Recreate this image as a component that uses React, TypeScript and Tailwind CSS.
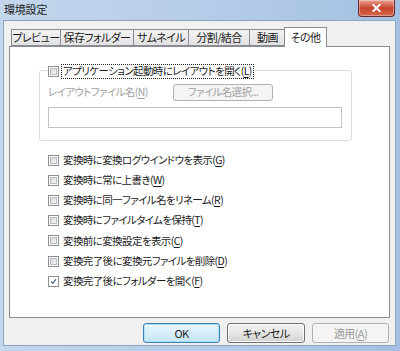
import React from 'react';

const font = "font-['Meiryo_UI','Noto_Sans_CJK_JP',sans-serif] [font-feature-settings:'palt']";

const tabs = ['プレビュー', '保存フォルダー', 'サムネイル', '分割/結合', '動画', 'その他'];
const tabWidths = ['w-[49px]', 'w-[73px]', 'w-[55px]', 'w-[61px]', 'w-[36px]', 'w-[43px]'];

const options = [
  { text: '変換時に変換ログウインドウを表示', key: 'G', checked: false },
  { text: '変換時に常に上書き', key: 'W', checked: false },
  { text: '変換時に同一ファイル名をリネーム', key: 'R', checked: false },
  { text: '変換時にファイルタイムを保持', key: 'T', checked: false },
  { text: '変換前に変換設定を表示', key: 'C', checked: false },
  { text: '変換完了後に変換元ファイルを削除', key: 'D', checked: false },
  { text: '変換完了後にフォルダーを開く', key: 'F', checked: true },
];

// Win7 風のチェックボックス
const CheckBox = ({ checked }: { checked?: boolean }) => (
  <span className="relative flex h-[11px] w-[11px] flex-shrink-0 border border-[#8e8f8f] bg-white p-px">
    {checked ? (
      <svg viewBox="0 0 9 9" className="h-full w-full">
        <path d="M1.5 4.6 L3.6 7 L7.6 1.6" fill="none" stroke="#3b4f8f" strokeWidth="1.5" />
      </svg>
    ) : (
      <span className="block h-full w-full border border-[#b9bdc2] bg-gradient-to-br from-[#d4d7db] to-[#f5f5f5]" />
    )}
  </span>
);

const Label = ({ text, k, disabled }: { text: string; k: string; disabled?: boolean }) => (
  <span className={`whitespace-nowrap ${disabled ? 'text-[#a0a0a0]' : 'text-[#1b1b1b]'}`}>
    {text}(<span className="underline underline-offset-2">{k}</span>)
  </span>
);

const App = () => {
  return (
    <div className={`flex h-[351px] w-[400px] flex-col bg-gradient-to-r from-[#c2d6ec] via-[#b6cde8] to-[#a3c0e2] text-[10.5px] leading-none tracking-[-0.6px] ${font}`}>
      {/* タイトルバー */}
      <div className="flex h-[20px] flex-shrink-0 items-start justify-between">
        <span className="mt-[4px] pl-[4px] text-[11px] tracking-[-0.2px] text-[#1a1a1a]">環境設定</span>
        <div className="mr-[5px] flex h-[17px] w-[37px] items-center justify-center rounded-b-[4px] border border-t-0 border-[#6d2a2a] bg-gradient-to-b from-[#e8a093] via-[#c8432e] to-[#d2674c] shadow-[inset_0_0_0_1px_rgba(255,255,255,0.35)]">
          <svg viewBox="0 0 10 9" className="h-[8px] w-[9px]">
            <path d="M1.5 1 L8.5 8 M8.5 1 L1.5 8" stroke="white" strokeWidth="2.2" strokeLinecap="square" />
          </svg>
        </div>
      </div>

      {/* 本体 */}
      <div className="ml-[3px] mr-[4px] flex flex-1 flex-col border border-[#8da2bc] bg-[#f0f0f0] pl-[5px] pr-[5px] pt-[6px]">
        <div className="relative z-10 flex h-[19px] items-end pl-[2px]">
          {tabs.map((t, i) => {
            const active = i === tabs.length - 1;
            return (
              <div
                key={t}
                className={
                  active
                    ? `${tabWidths[i]} -mb-px -ml-px flex h-[20px] items-center justify-center whitespace-nowrap border border-b-0 border-[#898c95] bg-white text-[11px] text-[#1b1b1b]`
                    : `${tabWidths[i]} flex h-[17px] items-center justify-center whitespace-nowrap border border-r-0 border-[#898c95] bg-gradient-to-b from-[#f3f3f3] to-[#e2e2e2] text-[11px] text-[#1b1b1b]`
                }
              >
                {t}
              </div>
            );
          })}
        </div>

        <div className="flex h-[272px] flex-col border border-[#898c95] bg-white pl-[29px] pt-[23px]">
          {/* グループボックス */}
          <div className="relative flex h-[71px] w-[313px] flex-col rounded-[3px] border border-[#d5dfe5] px-[8px] pt-[13px]">
            <div className="absolute left-[8px] top-[-7px] flex items-center gap-[2px] bg-white pr-[1px]">
              <CheckBox />
              <span className="border border-dotted border-[#222] px-[1px] py-[1px]">
                <Label text="アプリケーション起動時にレイアウトを開く" k="L" />
              </span>
            </div>
            <div className="flex items-center">
              <span className="w-[125px]">
                <Label text="レイアウトファイル名" k="N" disabled />
              </span>
              <div className="flex h-[17px] w-[100px] items-center justify-center whitespace-nowrap rounded-[3px] border border-[#adb2b5] bg-[#f4f4f4] text-[#a0a0a0]">
                ファイル名選択...
              </div>
            </div>
            <div className="mt-[6px] h-[21px] w-[294px] border border-[#c4c4c4] bg-white" />
          </div>

          {/* オプション一覧 */}
          <div className="mt-[9px] flex flex-col pl-[9px]">
            {options.map((o) => (
              <div key={o.key} className="flex h-[20.2px] items-center gap-[4px]">
                <CheckBox checked={o.checked} />
                <Label text={o.text} k={o.key} />
              </div>
            ))}
          </div>
        </div>

        {/* ボタン */}
        <div className="mt-[5px] flex justify-end gap-[7px] pr-[1px] text-[11px]">
          <div className="flex h-[20px] w-[77px] items-center justify-center rounded-[3px] border border-[#3c7fb1] bg-gradient-to-b from-[#eaf6fd] to-[#c4e5f6] text-[#1b1b1b] shadow-[inset_0_0_0_1px_#aee0f8]">
            OK
          </div>
          <div className="flex h-[20px] w-[78px] items-center justify-center rounded-[3px] border border-[#707070] bg-gradient-to-b from-[#f2f2f2] via-[#e6e6e6] to-[#d2d2d2] text-[#1b1b1b] shadow-[inset_0_0_0_1px_#fcfcfc]">
            キャンセル
          </div>
          <div className="flex h-[20px] w-[77px] items-center justify-center rounded-[3px] border border-[#adb2b5] bg-[#f4f4f4] text-[#9a9a9a]">
            適用(<span className="underline underline-offset-2">A</span>)
          </div>
        </div>
      </div>
      <div className="h-[5px] flex-shrink-0" />
    </div>
  );
};

export default App;
